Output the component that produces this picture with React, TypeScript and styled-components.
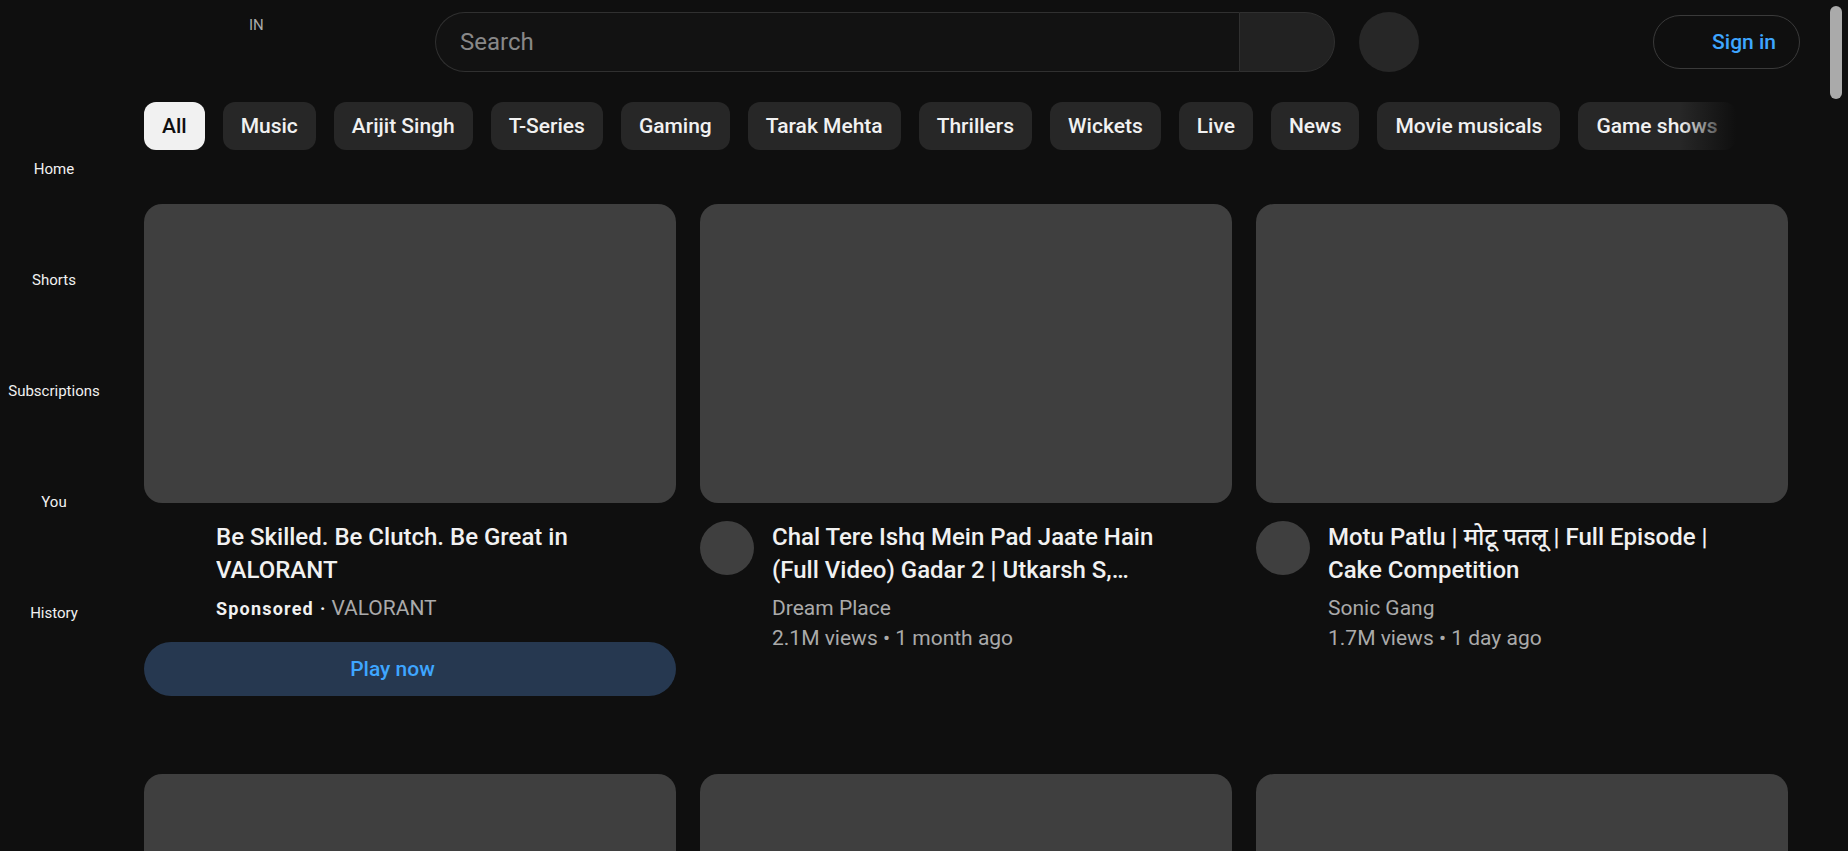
import React from "react";
import styled, { createGlobalStyle } from "styled-components";

const GlobalStyle = createGlobalStyle`
  html, body {
    margin: 0;
    padding: 0;
    height: 100%;
    overflow: hidden;
    background: #0f0f0f;
    color: #f1f1f1;
    font-family: Roboto, "Noto Sans", Arial, sans-serif;
  }
  * { box-sizing: border-box; }
`;

const Shell = styled.div`
  display: flex;
  height: 100vh;
  background: #0f0f0f;
`;

const Page = styled.div`
  flex: 1;
  min-width: 0;
  height: 100vh;
  overflow-y: auto;
  scrollbar-width: none;
  &::-webkit-scrollbar {
    display: none;
  }
`;

const ScrollTrack = styled.div`
  width: 24px;
  flex-shrink: 0;
  height: 100vh;
  padding: 6px;
  background: #0f0f0f;
`;

const ScrollThumb = styled.div`
  width: 12px;
  height: 93px;
  border-radius: 6px;
  background: #aaaaaa;
`;

const Header = styled.header`
  display: flex;
  align-items: center;
  height: 84px;
  padding: 0 24px;
`;

const Start = styled.div`
  display: flex;
  align-items: flex-start;
  width: 411px;
  height: 60px;
`;

const GuideSlot = styled.span`
  display: block;
  width: 60px;
  height: 60px;
`;

const LogoSlot = styled.span`
  display: block;
  width: 135px;
  height: 30px;
  margin-left: 24px;
`;

const CountryCode = styled.span`
  margin-left: 6px;
  margin-top: 4px;
  font-size: 15px;
  color: #aaaaaa;
`;

const SearchForm = styled.form`
  display: flex;
  width: 900px;
  height: 60px;
`;

const SearchInput = styled.input`
  flex: 1;
  min-width: 0;
  height: 60px;
  padding: 0 24px;
  background: #121212;
  border: 1px solid #303030;
  border-right: none;
  border-radius: 30px 0 0 30px;
  color: #f1f1f1;
  font-family: Roboto, Arial, sans-serif;
  font-size: 24px;
  outline: none;
  &::placeholder {
    color: #888888;
  }
`;

const SearchButton = styled.button`
  width: 96px;
  height: 60px;
  background: #222222;
  border: 1px solid #303030;
  border-radius: 0 30px 30px 0;
  padding: 0;
`;

const MicButton = styled.button`
  width: 60px;
  height: 60px;
  margin-left: 24px;
  border-radius: 50%;
  border: none;
  background: #272727;
  padding: 0;
`;

const SignIn = styled.button`
  margin-left: auto;
  height: 54px;
  padding: 0 23px 0 58px;
  border: 1px solid #3a3a3a;
  border-radius: 27px;
  background: transparent;
  color: #3ea6ff;
  font-family: Roboto, Arial, sans-serif;
  font-size: 21px;
  font-weight: 500;
`;

const Body = styled.div`
  display: flex;
  align-items: flex-start;
`;

const Sidebar = styled.nav`
  display: flex;
  flex-direction: column;
  width: 108px;
  flex-shrink: 0;
  padding-top: 6px;
`;

const GuideEntry = styled.a`
  display: flex;
  flex-direction: column;
  align-items: center;
  padding: 69px 0 21px;
  font-size: 15px;
  line-height: 21px;
  color: #f1f1f1;
  text-decoration: none;
`;

const Main = styled.main`
  flex: 1;
  min-width: 0;
`;

const ChipBar = styled.div`
  position: relative;
  height: 84px;
  margin: 0 36px;
  overflow: hidden;
`;

const ChipRow = styled.div`
  display: flex;
  align-items: center;
  gap: 18px;
  height: 84px;
  white-space: nowrap;
`;

const Chip = styled.button<{ $active?: boolean }>`
  flex-shrink: 0;
  height: 48px;
  padding: 0 18px;
  border: none;
  border-radius: 12px;
  background: ${(p) => (p.$active ? "#f1f1f1" : "#272727")};
  color: ${(p) => (p.$active ? "#0f0f0f" : "#f1f1f1")};
  font-family: Roboto, Arial, sans-serif;
  font-size: 21px;
  font-weight: 500;
`;

const ChipFade = styled.div`
  position: absolute;
  top: 0;
  right: 0;
  width: 108px;
  height: 100%;
  background: linear-gradient(to right, rgba(15, 15, 15, 0) 0%, #0f0f0f 52%);
  pointer-events: none;
`;

const Grid = styled.div`
  display: grid;
  grid-template-columns: repeat(3, 1fr);
  column-gap: 24px;
  row-gap: 60px;
  padding: 36px 36px 76px;
`;

const Card = styled.div`
  display: flex;
  flex-direction: column;
`;

const Thumb = styled.div`
  width: 100%;
  aspect-ratio: 16 / 9;
  border-radius: 18px;
  background: #3f3f3f;
`;

const Details = styled.div`
  display: flex;
  margin-top: 18px;
  padding-right: 36px;
`;

const Avatar = styled.div<{ $hidden?: boolean }>`
  width: 54px;
  height: 54px;
  flex-shrink: 0;
  margin-right: 18px;
  border-radius: 50%;
  background: ${(p) => (p.$hidden ? "transparent" : "#3f3f3f")};
`;

const Meta = styled.div`
  flex: 1;
  min-width: 0;
`;

const Title = styled.h3`
  margin: 0 0 6px;
  font-size: 24px;
  line-height: 33px;
  font-weight: 500;
  color: #f1f1f1;
  display: -webkit-box;
  -webkit-line-clamp: 2;
  -webkit-box-orient: vertical;
  overflow: hidden;
`;

const MetaLine = styled.div`
  font-size: 21px;
  line-height: 30px;
  color: #aaaaaa;
  white-space: nowrap;
`;

const SponsoredLine = styled.div`
  display: flex;
  align-items: baseline;
  font-size: 21px;
  line-height: 30px;
  color: #aaaaaa;
`;

const Badge = styled.span`
  font-size: 18px;
  font-weight: 700;
  letter-spacing: 1.2px;
  color: #f1f1f1;
`;

const Dot = styled.span`
  margin: 0 6px 0 6px;
  font-size: 18px;
  font-weight: 700;
  color: #f1f1f1;
`;

const PlayButton = styled.button`
  width: 100%;
  height: 54px;
  margin: 18px 0 18px;
  padding: 0 35px 0 0;
  border: none;
  border-radius: 27px;
  background: #263850;
  color: #3ea6ff;
  font-family: Roboto, Arial, sans-serif;
  font-size: 21px;
  font-weight: 500;
`;

const chips = [
  "All",
  "Music",
  "Arijit Singh",
  "T-Series",
  "Gaming",
  "Tarak Mehta",
  "Thrillers",
  "Wickets",
  "Live",
  "News",
  "Movie musicals",
  "Game shows",
  "Cricket",
  "Comedy",
];

const guide = ["Home", "Shorts", "Subscriptions", "You", "History"];

type Video = {
  title: string;
  channel: string;
  views: string;
  age: string;
};

const videos: Video[] = [
  {
    title:
      "Chal Tere Ishq Mein Pad Jaate Hain (Full Video) Gadar 2 | Utkarsh S, Mithoon, Sunny D, Ameesha P",
    channel: "Dream Place",
    views: "2.1M views",
    age: "1 month ago",
  },
  {
    title: "Motu Patlu | मोटू पतलू | Full Episode | Cake Competition",
    channel: "Sonic Gang",
    views: "1.7M views",
    age: "1 day ago",
  },
];

const filler: Video[] = Array.from({ length: 36 }, (_, i) => ({
  title: `Recommended video ${i + 1}`,
  channel: "Channel",
  views: `${(i % 9) + 1}.${i % 10}M views`,
  age: `${(i % 11) + 1} days ago`,
}));

function VideoCard({ video }: { video: Video }) {
  return (
    <Card>
      <Thumb />
      <Details>
        <Avatar />
        <Meta>
          <Title>{video.title}</Title>
          <MetaLine>{video.channel}</MetaLine>
          <MetaLine>
            {video.views} • {video.age}
          </MetaLine>
        </Meta>
      </Details>
    </Card>
  );
}

function AdCard() {
  return (
    <Card>
      <Thumb />
      <Details>
        <Avatar $hidden />
        <Meta>
          <Title>Be Skilled. Be Clutch. Be Great in VALORANT</Title>
          <SponsoredLine>
            <Badge>Sponsored</Badge>
            <Dot>·</Dot>
            <span>VALORANT</span>
          </SponsoredLine>
        </Meta>
      </Details>
      <PlayButton>Play now</PlayButton>
    </Card>
  );
}

export default function App() {
  const rest = [...videos, ...filler];
  return (
    <Shell>
      <GlobalStyle />
      <Page>
        <Header>
          <Start>
            <GuideSlot />
            <LogoSlot />
            <CountryCode>IN</CountryCode>
          </Start>
          <SearchForm onSubmit={(e) => e.preventDefault()}>
            <SearchInput placeholder="Search" />
            <SearchButton type="button" aria-label="Search" />
          </SearchForm>
          <MicButton aria-label="Search with your voice" />
          <SignIn>Sign in</SignIn>
        </Header>
        <Body>
          <Sidebar>
            {guide.map((g) => (
              <GuideEntry key={g}>{g}</GuideEntry>
            ))}
          </Sidebar>
          <Main>
            <ChipBar>
              <ChipRow>
                {chips.map((c, i) => (
                  <Chip key={c} $active={i === 0}>
                    {c}
                  </Chip>
                ))}
              </ChipRow>
              <ChipFade />
            </ChipBar>
            <Grid>
              <AdCard />
              {rest.map((v, i) => (
                <VideoCard key={i} video={v} />
              ))}
            </Grid>
          </Main>
        </Body>
      </Page>
      <ScrollTrack aria-hidden>
        <ScrollThumb />
      </ScrollTrack>
    </Shell>
  );
}
